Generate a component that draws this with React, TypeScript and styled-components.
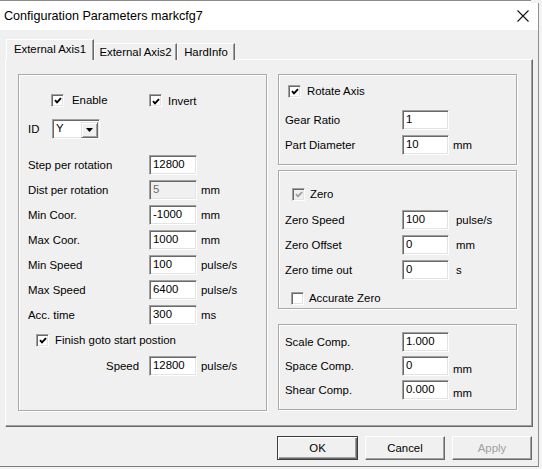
import * as React from 'react';
import styled, { createGlobalStyle, css } from 'styled-components';

type Field = { label: string; value: string; unit?: string; disabled?: boolean };

const leftFields: Field[] = [
    { label: 'Step per rotation', value: '12800' },
    { label: 'Dist per rotation', value: '5', unit: 'mm', disabled: true },
    { label: 'Min Coor.', value: '-1000', unit: 'mm' },
    { label: 'Max Coor.', value: '1000', unit: 'mm' },
    { label: 'Min Speed', value: '100', unit: 'pulse/s' },
    { label: 'Max Speed', value: '6400', unit: 'pulse/s' },
    { label: 'Acc. time', value: '300', unit: 'ms' },
];

const rotateFields: Field[] = [
    { label: 'Gear Ratio', value: '1' },
    { label: 'Part Diameter', value: '10', unit: 'mm' },
];

const zeroFields: Field[] = [
    { label: 'Zero Speed', value: '100', unit: 'pulse/s' },
    { label: 'Zero Offset', value: '0', unit: 'mm' },
    { label: 'Zero time out', value: '0', unit: 's' },
];

const compFields: Field[] = [
    { label: 'Scale Comp.', value: '1.000' },
    { label: 'Space Comp.', value: '0', unit: 'mm' },
    { label: 'Shear Comp.', value: '0.000', unit: 'mm' },
];

const tabs = [
    { title: 'External Axis1', width: 88, active: true },
    { title: 'External Axis2', width: 83 },
    { title: 'HardInfo', width: 58 },
];

const CheckMark = ({ disabled }: { disabled?: boolean }) => (
    <svg width="11" height="11" viewBox="0 0 11 11">
        <path
            d="M2.2 5.1 L4.4 7.5 L8.8 2.8"
            fill="none"
            stroke={disabled ? '#a0a0a0' : '#000'}
            strokeWidth="2.1"
        />
    </svg>
);

const Check = ({
    label,
    checked,
    disabled,
    gap = 7,
}: {
    label: string;
    checked?: boolean;
    disabled?: boolean;
    gap?: number;
}) => (
    <CheckItem $gap={gap}>
        <CheckBox $disabled={disabled}>{checked && <CheckMark disabled={disabled} />}</CheckBox>
        <span>{label}</span>
    </CheckItem>
);

const FieldList = ({
    fields,
    labelWidth,
    inputWidth,
    gap,
    unitGap,
    unitDrop = 0,
    alignRight,
}: {
    fields: Field[];
    labelWidth: number;
    inputWidth: number;
    gap: number;
    unitGap: number;
    unitDrop?: number;
    alignRight?: boolean;
}) => (
    <FieldGrid $labelWidth={labelWidth} $inputWidth={inputWidth} $gap={gap}>
        {fields.map((f) => (
            <React.Fragment key={f.label}>
                <FieldLabel $alignRight={alignRight}>{f.label}</FieldLabel>
                <TextBox readOnly defaultValue={f.value} $disabled={f.disabled} />
                <Unit $gap={unitGap} $drop={f.unit === 'mm' ? unitDrop : 0}>
                    {f.unit}
                </Unit>
            </React.Fragment>
        ))}
    </FieldGrid>
);

const App = () => (
    <>
        <GlobalStyle />
        <Screen>
            <BehindStrip />
            <Window>
                <TitleBar>
                    <Title>Configuration Parameters markcfg7</Title>
                    <svg width="12" height="12" viewBox="0 0 12 12">
                        <path d="M0.5 0.5 L11.5 11.5 M11.5 0.5 L0.5 11.5" stroke="#111" strokeWidth="1.1" />
                    </svg>
                </TitleBar>
                <DialogBody>
                    <TabStrip>
                        {tabs.map((t) => (
                            <Tab key={t.title} $active={t.active} $width={t.width}>
                                {t.title}
                            </Tab>
                        ))}
                    </TabStrip>
                    <TabPanel>
                        <GroupBox $height={337} $padTop={18}>
                            <CheckRow $indent={32}>
                                <CheckCell $width={98}>
                                    <Check label="Enable" checked gap={8} />
                                </CheckCell>
                                <Check label="Invert" checked gap={6} />
                            </CheckRow>
                            <IdRow>
                                <IdLabel>ID</IdLabel>
                                <Combo>
                                    <ComboText>Y</ComboText>
                                    <DropButton>
                                        <svg width="7" height="4" viewBox="0 0 7 4">
                                            <path d="M0 0 H7 L3.5 4 Z" fill="#000" />
                                        </svg>
                                    </DropButton>
                                </Combo>
                            </IdRow>
                            <Section $top={16} $indent={9}>
                                <FieldList fields={leftFields} labelWidth={121} inputWidth={48} gap={5} unitGap={4} />
                            </Section>
                            <Section $top={8} $indent={17}>
                                <Check label="Finish goto start postion" checked gap={6} />
                            </Section>
                            <Section $top={8} $indent={9}>
                                <FieldList
                                    fields={[{ label: 'Speed', value: '12800', unit: 'pulse/s' }]}
                                    labelWidth={121}
                                    inputWidth={48}
                                    gap={0}
                                    unitGap={4}
                                    alignRight
                                />
                            </Section>
                        </GroupBox>
                        <RightColumn>
                            <GroupBox $height={91} $padTop={9}>
                                <Section $indent={9}>
                                    <Check label="Rotate Axis" checked gap={6} />
                                </Section>
                                <Section $top={11} $indent={6}>
                                    <FieldList fields={rotateFields} labelWidth={117} inputWidth={47} gap={5} unitGap={4} />
                                </Section>
                            </GroupBox>
                            <GroupBox $height={139} $padTop={16} $marginTop={5}>
                                <Section $indent={13}>
                                    <Check label="Zero" checked disabled gap={5} />
                                </Section>
                                <Section $top={8} $indent={6}>
                                    <FieldList fields={zeroFields} labelWidth={117} inputWidth={47} gap={5} unitGap={7} />
                                </Section>
                                <Section $top={11} $indent={12}>
                                    <Check label="Accurate Zero" gap={5} />
                                </Section>
                            </GroupBox>
                            <GroupBox $height={86} $padTop={7} $marginTop={15}>
                                <Section $indent={6}>
                                    <FieldList
                                        fields={compFields}
                                        labelWidth={117}
                                        inputWidth={47}
                                        gap={4}
                                        unitGap={4}
                                        unitDrop={3}
                                    />
                                </Section>
                            </GroupBox>
                        </RightColumn>
                    </TabPanel>
                    <ButtonRow>
                        <PushButton $default $width={81}>OK</PushButton>
                        <PushButton $width={80}>Cancel</PushButton>
                        <PushButton $width={80} $disabled>Apply</PushButton>
                    </ButtonRow>
                </DialogBody>
            </Window>
        </Screen>
    </>
);

const GlobalStyle = createGlobalStyle`
    body {
        margin: 0;
        background: #f3f3f3;
        font-family: 'Liberation Sans', Arial, sans-serif;
        font-size: 11.4px;
        color: #000;
    }
`;

const Screen = styled.div`
    width: 542px;
    height: 469px;
    overflow: hidden;
    background: #f3f3f3;
    display: flex;
    flex-direction: column;
`;

const BehindStrip = styled.div`
    flex: none;
    height: 3px;
    width: 531px;
    box-sizing: border-box;
    background: #fff;
    border-top: 1px solid #8a8a8a;
`;

const Window = styled.div`
    flex: none;
    width: 539px;
    height: 464px;
    box-sizing: border-box;
    background: #f0f0f0;
    border-right: 1px solid #8f8f8f;
    border-bottom: 1px solid #7c7c7c;
    display: flex;
    flex-direction: column;
`;

const TitleBar = styled.div`
    flex: none;
    height: 26px;
    background: #fff;
    display: flex;
    align-items: center;
    justify-content: space-between;
    padding: 0 9px 1px 4px;
`;

const Title = styled.span`
    font-size: 12.6px;
    color: #000;
`;

const DialogBody = styled.div`
    padding: 9px 0 0 5px;
`;

const TabStrip = styled.div`
    display: flex;
    align-items: flex-end;
    height: 21px;
    padding-left: 1px;
    margin-bottom: -1px;
`;

const Tab = styled.div<{ $active?: boolean; $width: number }>`
    position: relative;
    box-sizing: border-box;
    width: ${({ $width }) => $width}px;
    height: ${({ $active }) => ($active ? 21 : 17)}px;
    padding-bottom: ${({ $active }) => ($active ? 3 : 1)}px;
    display: flex;
    align-items: center;
    justify-content: center;
    background: #f0f0f0;
    border-top: 1px solid #fff;
    border-left: 1px solid #fff;
    border-right: 1px solid #696969;
    box-shadow: inset -1px 0 0 #a0a0a0;
    z-index: ${({ $active }) => ($active ? 1 : 0)};
`;

const TabPanel = styled.div`
    box-sizing: border-box;
    width: 528px;
    height: 368px;
    border-top: 1px solid #fff;
    border-left: 1px solid #fff;
    border-right: 1px solid #696969;
    border-bottom: 1px solid #696969;
    box-shadow: inset -1px -1px 0 #a0a0a0;
    display: grid;
    grid-template-columns: 249px 239px;
    column-gap: 11px;
    align-items: start;
    padding: 14px 0 0 12px;
`;

const RightColumn = styled.div`
    display: flex;
    flex-direction: column;
`;

const GroupBox = styled.div<{ $height: number; $padTop: number; $marginTop?: number }>`
    box-sizing: border-box;
    height: ${({ $height }) => $height}px;
    margin-top: ${({ $marginTop = 0 }) => $marginTop}px;
    padding-top: ${({ $padTop }) => $padTop}px;
    border: 1px solid #aaaaaa;
    box-shadow: inset 1px 1px 0 #fff, 1px 1px 0 #fff;
`;

const Section = styled.div<{ $top?: number; $indent: number }>`
    margin-top: ${({ $top = 0 }) => $top}px;
    padding-left: ${({ $indent }) => $indent}px;
`;

const CheckRow = styled.div<{ $indent: number }>`
    display: flex;
    align-items: center;
    padding-left: ${({ $indent }) => $indent}px;
`;

const CheckCell = styled.div<{ $width: number }>`
    width: ${({ $width }) => $width}px;
`;

const CheckItem = styled.label<{ $gap: number }>`
    display: inline-flex;
    align-items: center;
    gap: ${({ $gap }) => $gap}px;
    height: 14px;
    line-height: 14px;
`;

const sunken = css`
    box-sizing: border-box;
    border: 1px solid;
    border-color: #a0a0a0 #fff #fff #a0a0a0;
    box-shadow: inset 1px 1px 0 #696969, inset -1px -1px 0 #e3e3e3;
`;

const CheckBox = styled.span<{ $disabled?: boolean }>`
    ${sunken};
    width: 13px;
    height: 13px;
    display: flex;
    align-items: center;
    justify-content: center;
    padding: 1px 0 0 1px;
    background: ${({ $disabled }) => ($disabled ? '#f0f0f0' : '#fff')};
`;

const IdRow = styled.div`
    display: flex;
    align-items: center;
    margin-top: 11px;
    padding-left: 9px;
`;

const IdLabel = styled.span`
    width: 24px;
`;

const Combo = styled.div`
    ${sunken};
    width: 48px;
    height: 20px;
    background: #fff;
    display: flex;
    align-items: center;
    justify-content: space-between;
    padding: 2px 1px 1px 2px;
`;

const ComboText = styled.span`
    padding-left: 1px;
    margin-top: -3px;
`;

const DropButton = styled.span`
    box-sizing: border-box;
    width: 17px;
    height: 16px;
    display: flex;
    align-items: center;
    justify-content: center;
    background: #f0f0f0;
    border: 1px solid;
    border-color: #e3e3e3 #696969 #696969 #e3e3e3;
    box-shadow: inset 1px 1px 0 #fff, inset -1px -1px 0 #a0a0a0;
`;

const FieldGrid = styled.div<{ $labelWidth: number; $inputWidth: number; $gap: number }>`
    display: grid;
    grid-template-columns: ${({ $labelWidth, $inputWidth }) => `${$labelWidth}px ${$inputWidth}px auto`};
    grid-auto-rows: 20px;
    row-gap: ${({ $gap }) => $gap}px;
    align-items: center;
`;

const FieldLabel = styled.span<{ $alignRight?: boolean }>`
    text-align: ${({ $alignRight }) => ($alignRight ? 'right' : 'left')};
    padding-right: ${({ $alignRight }) => ($alignRight ? 10 : 0)}px;
    white-space: nowrap;
`;

const TextBox = styled.input<{ $disabled?: boolean }>`
    ${sunken};
    width: 100%;
    height: 20px;
    margin: 0;
    padding: 0 2px 2px 3px;
    font: inherit;
    outline: none;
    background: ${({ $disabled }) => ($disabled ? '#f0f0f0' : '#fff')};
    color: ${({ $disabled }) => ($disabled ? '#6d6d6d' : '#000')};
`;

const Unit = styled.span<{ $gap: number; $drop: number }>`
    padding-left: ${({ $gap }) => $gap}px;
    padding-top: ${({ $drop }) => $drop * 2}px;
    white-space: nowrap;
`;

const ButtonRow = styled.div`
    width: 528px;
    display: flex;
    justify-content: flex-end;
    gap: 7px;
    margin-top: 9px;
    padding-right: 1px;
    box-sizing: border-box;
`;

const PushButton = styled.div<{ $default?: boolean; $disabled?: boolean; $width: number }>`
    box-sizing: border-box;
    width: ${({ $width }) => $width}px;
    height: 24px;
    display: flex;
    align-items: center;
    justify-content: center;
    padding-bottom: 1px;
    background: #f0f0f0;
    color: ${({ $disabled }) => ($disabled ? '#a0a0a0' : '#000')};
    border: 1px solid;
    ${({ $default }) =>
        $default
            ? css`
                  border-color: #3c3c3c;
                  box-shadow: inset 1px 1px 0 #fff, inset -1px -1px 0 #696969, inset -2px -2px 0 #a0a0a0;
              `
            : css`
                  border-color: #fff #696969 #696969 #fff;
                  box-shadow: inset -1px -1px 0 #a0a0a0;
              `}
`;

export default App;
